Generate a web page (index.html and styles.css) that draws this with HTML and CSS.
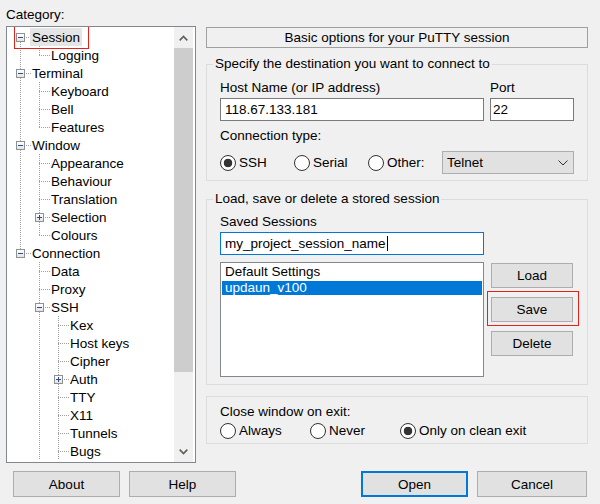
FILE: index.html
```html
<!DOCTYPE html>
<html>
<head>
<meta charset="utf-8">
<link rel="stylesheet" href="styles.css">
</head>
<body>
<div class="dialog">
  <div class="main">
    <div class="left">
      <div class="cat">Category:</div>
      <div class="tree">
        <div class="tree-body">
          <div class="row"><span class="c first"><span class="box minus"></span></span><span class="lbl sel">Session</span></div>
          <div class="row"><span class="c v"></span><span class="c ell"></span><span class="lbl">Logging</span></div>
          <div class="row"><span class="c tee"><span class="box minus"></span></span><span class="lbl">Terminal</span></div>
          <div class="row"><span class="c v"></span><span class="c tee"></span><span class="lbl">Keyboard</span></div>
          <div class="row"><span class="c v"></span><span class="c tee"></span><span class="lbl">Bell</span></div>
          <div class="row"><span class="c v"></span><span class="c ell"></span><span class="lbl">Features</span></div>
          <div class="row"><span class="c tee"><span class="box minus"></span></span><span class="lbl">Window</span></div>
          <div class="row"><span class="c v"></span><span class="c tee"></span><span class="lbl">Appearance</span></div>
          <div class="row"><span class="c v"></span><span class="c tee"></span><span class="lbl">Behaviour</span></div>
          <div class="row"><span class="c v"></span><span class="c tee"></span><span class="lbl">Translation</span></div>
          <div class="row"><span class="c v"></span><span class="c tee"><span class="box plus"></span></span><span class="lbl">Selection</span></div>
          <div class="row"><span class="c v"></span><span class="c ell"></span><span class="lbl">Colours</span></div>
          <div class="row"><span class="c ell"><span class="box minus"></span></span><span class="lbl">Connection</span></div>
          <div class="row"><span class="c"></span><span class="c tee"></span><span class="lbl">Data</span></div>
          <div class="row"><span class="c"></span><span class="c tee"></span><span class="lbl">Proxy</span></div>
          <div class="row"><span class="c"></span><span class="c tee"><span class="box minus"></span></span><span class="lbl">SSH</span></div>
          <div class="row"><span class="c"></span><span class="c v"></span><span class="c tee"></span><span class="lbl">Kex</span></div>
          <div class="row"><span class="c"></span><span class="c v"></span><span class="c tee"></span><span class="lbl">Host keys</span></div>
          <div class="row"><span class="c"></span><span class="c v"></span><span class="c tee"></span><span class="lbl">Cipher</span></div>
          <div class="row"><span class="c"></span><span class="c v"></span><span class="c tee"><span class="box plus"></span></span><span class="lbl">Auth</span></div>
          <div class="row"><span class="c"></span><span class="c v"></span><span class="c tee"></span><span class="lbl">TTY</span></div>
          <div class="row"><span class="c"></span><span class="c v"></span><span class="c tee"></span><span class="lbl">X11</span></div>
          <div class="row"><span class="c"></span><span class="c v"></span><span class="c tee"></span><span class="lbl">Tunnels</span></div>
          <div class="row"><span class="c"></span><span class="c v"></span><span class="c tee"></span><span class="lbl">Bugs</span></div>
        </div>
        <div class="sb">
          <div class="sb-btn"><svg width="9" height="6" viewBox="0 0 9 6"><polyline points="0.7,5.3 4.5,1.5 8.3,5.3" fill="none" stroke="#606060" stroke-width="1.7"/></svg></div>
          <div class="sb-track"><div class="sb-thumb"></div></div>
          <div class="sb-btn"><svg width="9" height="6" viewBox="0 0 9 6"><polyline points="0.7,0.7 4.5,4.5 8.3,0.7" fill="none" stroke="#606060" stroke-width="1.7"/></svg></div>
        </div>
      </div>
    </div>

    <div class="right">
      <div class="header">Basic options for your PuTTY session</div>

      <div class="group g1">
        <div class="legend">Specify the destination you want to connect to</div>
        <div class="host-grid">
          <div class="fl">Host Name (or IP address)</div>
          <div class="fl">Port</div>
          <div class="input">118.67.133.181</div>
          <div class="input port">22</div>
        </div>
        <div class="fl gap7">Connection type:</div>
        <div class="conn-row">
          <div class="radio"><span class="circle on"></span><span>SSH</span></div>
          <div class="radio"><span class="circle"></span><span>Serial</span></div>
          <div class="radio"><span class="circle"></span><span>Other:</span></div>
          <div class="select"><span>Telnet</span><svg width="10" height="6" viewBox="0 0 10 6"><polyline points="0.5,0.5 5,5 9.5,0.5" fill="none" stroke="#333" stroke-width="1"/></svg></div>
        </div>
      </div>

      <div class="group g2">
        <div class="legend">Load, save or delete a stored session</div>
        <div class="fl">Saved Sessions</div>
        <div class="input focus">my_project_session_name<span class="caret"></span></div>
        <div class="sess-row">
          <div class="list">
            <div class="item">Default Settings</div>
            <div class="item selected">updaun_v100</div>
          </div>
          <div class="btn-col">
            <div class="btn">Load</div>
            <div class="btn marked">Save</div>
            <div class="btn">Delete</div>
          </div>
        </div>
      </div>

      <div class="group g3">
        <div class="fl">Close window on exit:</div>
        <div class="exit-row">
          <div class="radio"><span class="circle"></span><span>Always</span></div>
          <div class="radio"><span class="circle"></span><span>Never</span></div>
          <div class="radio"><span class="circle on"></span><span>Only on clean exit</span></div>
        </div>
      </div>
    </div>
  </div>

  <div class="bottom">
    <div class="btn wide">About</div>
    <div class="btn wide">Help</div>
    <div class="spacer"></div>
    <div class="btn wide default">Open</div>
    <div class="btn cancel">Cancel</div>
  </div>
</div>
</body>
</html>
```
FILE: styles.css
```css
* { box-sizing: border-box; }
html, body { margin: 0; padding: 0; }
body {
  background: #f0f0f0;
  font-family: "Liberation Sans", Arial, sans-serif;
  font-size: 13.5px;
  color: #000;
}
.dialog {
  width: 600px;
  height: 504px;
  display: flex;
  flex-direction: column;
}
.main {
  display: flex;
  padding-left: 6px;
}
.left { width: 190px; flex: none; }
.cat {
  padding-top: 7px;
  line-height: 16px;
  margin-bottom: 3px;
}
.tree {
  height: 437px;
  border: 1px solid #828790;
  background: #fff;
  display: flex;
}
.tree-body {
  flex: 1;
  padding-top: 1px;
  overflow: hidden;
}
.row {
  display: flex;
  height: 18px;
  padding-left: 6px;
}
.c {
  display: block;
  width: 19px;
  height: 18px;
  flex: none;
  background-repeat: no-repeat;
}
.v {
  background-image: repeating-linear-gradient(to bottom, #a0a0a0 0 1px, transparent 1px 2px);
  background-position: 7px 0;
  background-size: 1px 18px;
}
.tee {
  background-image: repeating-linear-gradient(to bottom, #a0a0a0 0 1px, transparent 1px 2px),
                    repeating-linear-gradient(to right, #a0a0a0 0 1px, transparent 1px 2px);
  background-position: 7px 0, 7px 9px;
  background-size: 1px 18px, 11px 1px;
}
.ell {
  background-image: repeating-linear-gradient(to bottom, #a0a0a0 0 1px, transparent 1px 2px),
                    repeating-linear-gradient(to right, #a0a0a0 0 1px, transparent 1px 2px);
  background-position: 7px 0, 7px 9px;
  background-size: 1px 10px, 11px 1px;
}
.first {
  background-image: repeating-linear-gradient(to bottom, #a0a0a0 0 1px, transparent 1px 2px),
                    repeating-linear-gradient(to right, #a0a0a0 0 1px, transparent 1px 2px);
  background-position: 7px 10px, 7px 9px;
  background-size: 1px 8px, 11px 1px;
}
.box {
  display: block;
  width: 9px;
  height: 9px;
  margin: 5px 0 0 3px;
  border: 1px solid #919191;
}
.box.minus {
  background:
    linear-gradient(#2c4a9a, #2c4a9a) 1px 3px / 5px 1px no-repeat,
    linear-gradient(#ffffff, #e3e3e3);
}
.box.plus {
  background:
    linear-gradient(#2c4a9a, #2c4a9a) 1px 3px / 5px 1px no-repeat,
    linear-gradient(#2c4a9a, #2c4a9a) 3px 1px / 1px 5px no-repeat,
    linear-gradient(#ffffff, #e3e3e3);
}
.lbl {
  margin-left: -2px;
  padding: 1px 2px 0;
  height: 18px;
  line-height: 18px;
  white-space: nowrap;
}
.lbl.sel {
  background: #e5e5e5;
  position: relative;
}
.lbl.sel::after {
  content: "";
  position: absolute;
  left: -16px;
  right: -7px;
  top: -3px;
  bottom: -3px;
  border: 1px solid #e8201a;
}
.sb {
  width: 19px;
  flex: none;
  margin-right: 2px;
  background: #f0f0f0;
  display: flex;
  flex-direction: column;
}
.sb-btn {
  height: 21px;
  display: flex;
  align-items: center;
  justify-content: center;
  flex: none;
}
.sb-btn svg { display: block; margin-left: -1px; }
.sb-track { flex: 1; }
.sb-thumb { height: 324px; background: #cdcdcd; }

.right {
  width: 382px;
  margin-left: 10px;
  padding-top: 27px;
  flex: none;
}
.header {
  height: 21px;
  border: 1px solid #a0a0a0;
  line-height: 19px;
  text-align: center;
}
.group {
  border: 1px solid #dcdcdc;
  padding: 0 13px;
}
.legend {
  margin-top: -9px;
  margin-left: -7px;
  padding: 0 2px;
  background: #f0f0f0;
  width: max-content;
  line-height: 16px;
}
.fl { line-height: 16px; white-space: nowrap; }
.g1 { margin-top: 16px; padding-bottom: 6px; }
.host-grid {
  margin-top: 8px;
  display: grid;
  grid-template-columns: 264px 84px;
  column-gap: 6px;
  row-gap: 2px;
}
.input {
  height: 23px;
  border: 1px solid #7a7a7a;
  background: #fff;
  padding-left: 4px;
  line-height: 21px;
  white-space: nowrap;
}
.input.port { padding-left: 2px; }
.input.focus { border-color: #0078d7; margin-top: 2px; width: 264px; }
.caret {
  display: inline-block;
  width: 1px;
  height: 15px;
  background: #000;
  vertical-align: -3px;
  margin-left: 1px;
}
.gap7 { margin-top: 7px; }
.conn-row {
  margin-top: 7px;
  display: grid;
  grid-template-columns: 74px 74px 74px 1fr;
  align-items: center;
  height: 23px;
}
.radio {
  display: flex;
  align-items: center;
  gap: 3px;
  white-space: nowrap;
}
.circle {
  display: block;
  width: 16px;
  height: 16px;
  border-radius: 50%;
  border: 1px solid #333;
  background: #fff;
  flex: none;
}
.circle.on {
  background: radial-gradient(circle at center, #333 0 4px, #fff 4.6px);
}
.select {
  height: 23px;
  border: 1px solid #adadad;
  background: #e1e1e1;
  display: flex;
  align-items: center;
  justify-content: space-between;
  padding: 0 5px 0 4px;
}
.select svg { display: block; }

.g2 { margin-top: 18px; padding-bottom: 7px; }
.g2 .fl { margin-top: 7px; }
.sess-row {
  margin-top: 7px;
  display: grid;
  grid-template-columns: 264px 82px;
  column-gap: 7px;
}
.list {
  height: 115px;
  border: 1px solid #828790;
  background: #fff;
  padding: 2px 1px;
}
.item {
  height: 14px;
  line-height: 14px;
  padding-left: 3px;
  white-space: nowrap;
}
.item + .item { margin-top: 2px; }
.item.selected { background: #0078d7; color: #fff; }
.btn-col {
  display: flex;
  flex-direction: column;
  gap: 9px;
  padding-top: 1px;
}
.btn {
  height: 25px;
  border: 1px solid #adadad;
  background: #e1e1e1;
  display: flex;
  align-items: center;
  justify-content: center;
  white-space: nowrap;
}
.btn.marked { position: relative; }
.btn.marked::after {
  content: "";
  position: absolute;
  left: -5px;
  right: -7px;
  top: -7px;
  bottom: -5px;
  border: 1px solid #e8201a;
}

.g3 { margin-top: 11px; padding-top: 7px; padding-bottom: 4px; }
.exit-row {
  margin-top: 2px;
  display: grid;
  grid-template-columns: 90px 90px 1fr;
  align-items: center;
  height: 17px;
  line-height: 17px;
}

.bottom {
  margin-top: 8px;
  display: flex;
  gap: 9px;
  padding: 0 13px;
}
.bottom .btn { height: 26px; }
.btn.wide { width: 107px; }
.btn.cancel { width: 110px; }
.btn.default { border: 2px solid #0078d7; }
.spacer { flex: 1; }
```
